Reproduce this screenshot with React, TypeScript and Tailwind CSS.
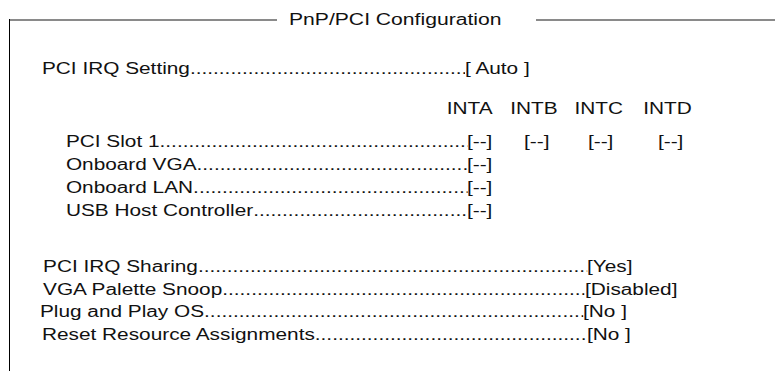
import React from "react";

const DOTS = ".".repeat(100);

function Leader({ label, width }: { label: string; width: string }) {
  return (
    <div className={`flex min-w-0 ${width}`}>
      <span className="whitespace-nowrap">{label}</span>
      <span className="min-w-0 flex-1 overflow-hidden whitespace-nowrap">{DOTS}</span>
    </div>
  );
}

export default function App() {
  return (
    <div className="relative h-[371px] w-[775px] overflow-hidden bg-white font-['Liberation_Sans',Arial,sans-serif] text-[16px] text-[#111]">
      <div className="pt-[19px]">
        <div className="ml-[9px] h-[352px] border-l border-black">
          {/* header line with title */}
          <div className="flex h-[2px] items-center">
            <div className="h-[2px] w-[267px] bg-[#8a8a8a]" />
            <div className="ml-[12px] w-[215px] shrink-0">
              <span className="inline-block origin-left scale-x-[1.32] whitespace-nowrap leading-[20px]">
                PnP/PCI Configuration
              </span>
            </div>
            <div className="ml-[32px] h-[2px] flex-1 bg-[#8a8a8a]" />
          </div>

          {/* content (horizontally stretched like the source scan) */}
          <div className="w-[589px] origin-top-left scale-x-[1.3]">
            <div className="mt-[36.5px] flex h-[23px] items-center pl-[24.6px]">
              <Leader label="PCI IRQ Setting" width="w-[325.4px]" />
              <span className="whitespace-pre">[ Auto ]</span>
            </div>

            <div className="mt-[17px] flex h-[23px] items-center pl-[336px]">
              <span>INTA</span>
              <span className="ml-[13.5px]">INTB</span>
              <span className="ml-[13px]">INTC</span>
              <span className="ml-[15.5px]">INTD</span>
            </div>

            <div className="mt-[10px] flex flex-col">
              <div className="flex h-[23px] items-center pl-[43px]">
                <Leader label="PCI Slot 1" width="w-[308.5px]" />
                <span>[--]</span>
                <span className="ml-[24.4px]">[--]</span>
                <span className="ml-[29.6px]">[--]</span>
                <span className="ml-[34.3px]">[--]</span>
              </div>
              <div className="flex h-[23px] items-center pl-[43px]">
                <Leader label="Onboard VGA" width="w-[308.5px]" />
                <span>[--]</span>
              </div>
              <div className="flex h-[23px] items-center pl-[43px]">
                <Leader label="Onboard LAN" width="w-[308.5px]" />
                <span>[--]</span>
              </div>
              <div className="flex h-[23px] items-center pl-[43px]">
                <Leader label="USB Host Controller" width="w-[308.5px]" />
                <span>[--]</span>
              </div>
            </div>

            <div className="mt-[33.5px] flex flex-col">
              <div className="flex h-[22.6px] items-center pl-[25.4px]">
                <Leader label="PCI IRQ Sharing" width="w-[418.4px]" />
                <span>[Yes]</span>
              </div>
              <div className="flex h-[22.6px] items-center pl-[25.4px]">
                <Leader label="VGA Palette Snoop" width="w-[416.9px]" />
                <span>[Disabled]</span>
              </div>
              <div className="flex h-[22.6px] items-center pl-[23px]">
                <Leader label="Plug and Play OS" width="w-[417.8px]" />
                <span className="whitespace-pre">[No ]</span>
              </div>
              <div className="flex h-[22.6px] items-center pl-[24.6px]">
                <Leader label="Reset Resource Assignments" width="w-[419.2px]" />
                <span className="whitespace-pre">[No ]</span>
              </div>
            </div>
          </div>
        </div>
      </div>
    </div>
  );
}
